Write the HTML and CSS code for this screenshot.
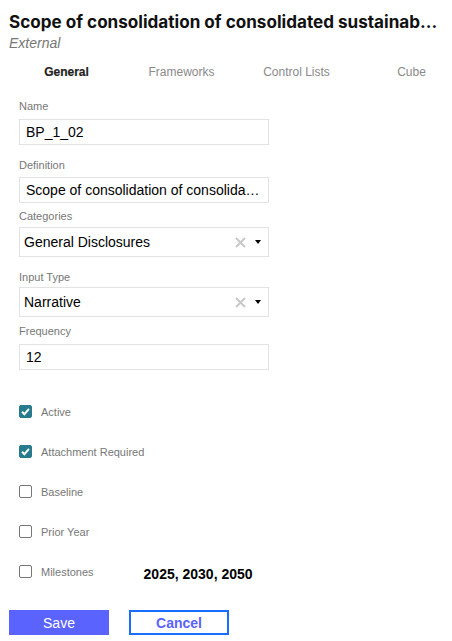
FILE: index.html
```html
<!DOCTYPE html>
<html>
<head>
<meta charset="utf-8">
<link rel="stylesheet" href="styles.css">
</head>
<body>
<div class="page">
  <h1 class="title">Scope of consolidation of consolidated sustainab...</h1>
  <div class="subtitle">External</div>
  <div class="tabs">
    <div class="tab active">General</div>
    <div class="tab">Frameworks</div>
    <div class="tab">Control Lists</div>
    <div class="tab">Cube</div>
  </div>
  <div class="form">
    <div class="field f-name">
      <div class="label">Name</div>
      <div class="input">BP_1_02</div>
    </div>
    <div class="field f-def">
      <div class="label">Definition</div>
      <div class="input">Scope of consolidation of consolida…</div>
    </div>
    <div class="field f-cat">
      <div class="label">Categories</div>
      <div class="select">
        <span class="sel-text">General Disclosures</span>
        <span class="clear">
          <svg width="11" height="11" viewBox="0 0 11 11"><path d="M1 1L10 10M10 1L1 10" stroke="#c8c8c8" stroke-width="2"/></svg>
        </span>
        <span class="caret"></span>
      </div>
    </div>
    <div class="field f-type">
      <div class="label">Input Type</div>
      <div class="select">
        <span class="sel-text">Narrative</span>
        <span class="clear">
          <svg width="11" height="11" viewBox="0 0 11 11"><path d="M1 1L10 10M10 1L1 10" stroke="#c8c8c8" stroke-width="2"/></svg>
        </span>
        <span class="caret"></span>
      </div>
    </div>
    <div class="field f-freq">
      <div class="label">Frequency</div>
      <div class="input">12</div>
    </div>
  </div>
  <div class="checks">
    <div class="check"><span class="box checked"><svg width="13" height="13" viewBox="0 0 13 13"><path d="M3 6.8L5.4 9.2L10 3.8" fill="none" stroke="#fff" stroke-width="2"/></svg></span><span class="clabel">Active</span></div>
    <div class="check"><span class="box checked"><svg width="13" height="13" viewBox="0 0 13 13"><path d="M3 6.8L5.4 9.2L10 3.8" fill="none" stroke="#fff" stroke-width="2"/></svg></span><span class="clabel">Attachment Required</span></div>
    <div class="check"><span class="box"></span><span class="clabel">Baseline</span></div>
    <div class="check"><span class="box"></span><span class="clabel">Prior Year</span></div>
    <div class="check"><span class="box"></span><span class="clabel">Milestones</span><span class="milestones">2025, 2030, 2050</span></div>
  </div>
  <div class="buttons">
    <button class="btn save">Save</button>
    <button class="btn cancel">Cancel</button>
  </div>
</div>
</body>
</html>
```
FILE: styles.css
```css
* { box-sizing: border-box; }
html, body { margin: 0; padding: 0; background: #fff; }
body { font-family: "Liberation Sans", Arial, sans-serif; color: #000; }
.page { padding: 10px 0 0 9px; width: 452px; overflow: hidden; }
.title {
  font-family: Inter, "Liberation Sans", sans-serif;
  font-weight: 700;
  font-size: 17.1px;
  line-height: 24px;
  margin: 0;
  white-space: nowrap;
  color: #111;
}
.subtitle {
  font-style: italic;
  font-size: 14px;
  color: #777;
  line-height: 18px;
  margin-top: 0;
}
.tabs { display: flex; width: 460px; margin-top: 12px; }
.tab {
  width: 115px;
  text-align: center;
  font-size: 12px;
  line-height: 16px;
  color: #8a8a8a;
}
.tab.active { color: #222; font-weight: 600; -webkit-text-stroke: 0.2px #222; }
.form { padding-left: 10px; margin-top: 20px; }
.label { font-size: 11px; color: #777; line-height: 13px; }
.input, .select {
  width: 250px;
  border: 1px solid #e3e3e3;
  font-size: 14px;
  color: #000;
  display: flex;
  align-items: center;
  white-space: nowrap;
}
.input { height: 26px; padding-left: 6px; margin-top: 6px; }
.select { height: 30px; padding-left: 4px; margin-top: 4px; }
.sel-text { flex: 1; }
.clear { display: flex; margin-right: 9px; }
.caret {
  width: 0; height: 0;
  border-left: 3.5px solid transparent;
  border-right: 3.5px solid transparent;
  border-top: 4px solid #000;
  margin-right: 7px;
}
.f-def { margin-top: 14px; }
.f-def .input { margin-top: 5px; }
.f-cat { margin-top: 7px; }
.f-type { margin-top: 14px; }
.f-type .select { margin-top: 3px; }
.f-freq { margin-top: 8px; }
.checks { padding-left: 10px; margin-top: 35px; display: flex; flex-direction: column; gap: 27px; }
.check { display: flex; align-items: center; height: 13px; }
.box {
  width: 13px; height: 13px;
  border: 1px solid #767676;
  border-radius: 2px;
  display: flex;
}
.box.checked { background: #287b8c; border-color: #287b8c; }
.box svg { margin: -1px; }
.clabel { margin-left: 9px; font-size: 11px; color: #777; }
.milestones { margin-left: 50px; font-weight: 700; font-size: 14px; color: #000; margin-top: 4px; }
.buttons { display: flex; gap: 20px; margin-top: 32px; }
.btn {
  width: 100px; height: 25px;
  font-family: "Liberation Sans", Arial, sans-serif;
  font-size: 14px;
  padding: 0;
}
.save { background: #5b63fe; color: #fff; border: none; }
.cancel { background: #fff; color: #5b63fe; border: 2px solid #1a6dff; font-weight: 700; height: 25px; }
```
